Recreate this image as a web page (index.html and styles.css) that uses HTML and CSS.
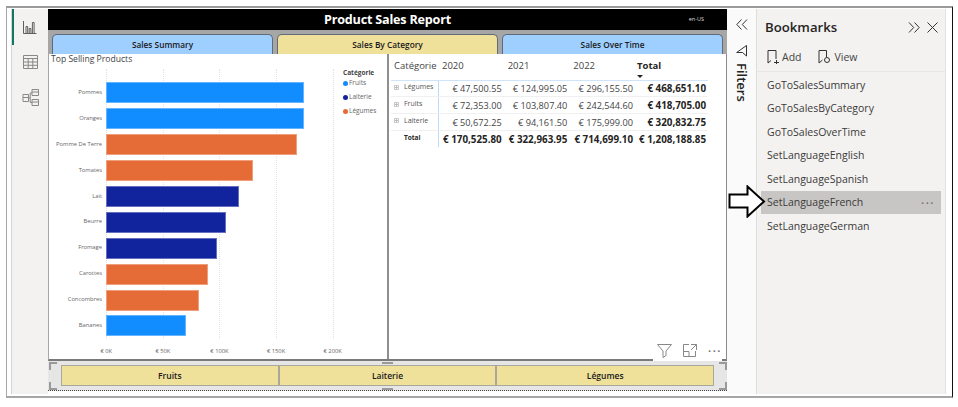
FILE: index.html

```html
<!DOCTYPE html>
<html>
<head>
<meta charset="utf-8">
<title>Product Sales Report</title>
<link rel="stylesheet" href="styles.css">
</head>
<body>
<div class="frame">
  <nav class="sidebar">
    <div class="nav-item active">
      <svg width="14" height="14" viewBox="0 0 14 14" fill="none" stroke="#605e5c"><path d="M.5 1v12.5h13M3 13V6.5h1.700V13M6.200 13V8.500h1.700V13M9.400 13V2.500h1.700V13"/></svg>
    </div>
    <div class="nav-item">
      <svg width="15" height="14" viewBox="0 0 15 14" fill="none" stroke="#8a8886"><path d="M.5.5h14v13H.5zM.5 3.500h14M.5 7h14M.5 10.300h14M5.200 3.500v10M9.800 3.500v10"/></svg>
    </div>
    <div class="nav-item">
      <svg width="17" height="17" viewBox="0 0 17 17" fill="none" stroke="#8a8886"><path d="M1 5.500h5.500v7H1zM1 8.500h5.500M10 .5h6.500v6H10zM10 3h6.500M10 10.500h6.500v6H10zM10 13h6.500M6.500 9h1.700M8.200 4v9.500M8.200 4H10M8.200 13.500H10"/></svg>
    </div>
  </nav>

  <main class="report">
    <header class="report-title">
      <h1>Product Sales Report</h1>
      <span class="locale">en-US</span>
    </header>
    <div class="tabs">
      <div class="tab tab-blue">Sales Summary</div>
      <div class="tab tab-yellow">Sales By Category</div>
      <div class="tab tab-blue">Sales Over Time</div>
    </div>

    <div class="panels">
      <section class="chart">
        <h2>Top Selling Products</h2>
        <div class="chart-body">
          <div class="plot">
            <div class="gridlines"><i></i><i></i><i></i><i></i><i></i></div>
            <div class="row"><span class="row-label">Pommes</span><b class="bar fruits" style="width:198px"></b></div>
            <div class="row"><span class="row-label">Oranges</span><b class="bar fruits" style="width:198px"></b></div>
            <div class="row"><span class="row-label">Pomme De Terre</span><b class="bar legumes" style="width:191px"></b></div>
            <div class="row"><span class="row-label">Tomates</span><b class="bar legumes" style="width:147px"></b></div>
            <div class="row"><span class="row-label">Lait</span><b class="bar laiterie" style="width:133px"></b></div>
            <div class="row"><span class="row-label">Beurre</span><b class="bar laiterie" style="width:120px"></b></div>
            <div class="row"><span class="row-label">Fromage</span><b class="bar laiterie" style="width:111px"></b></div>
            <div class="row"><span class="row-label">Carottes</span><b class="bar legumes" style="width:102px"></b></div>
            <div class="row"><span class="row-label">Concombres</span><b class="bar legumes" style="width:93px"></b></div>
            <div class="row"><span class="row-label">Bananes</span><b class="bar fruits" style="width:80px"></b></div>
            <div class="axis"><span>€ 0K</span><span>€ 50K</span><span>€ 100K</span><span>€ 150K</span><span>€ 200K</span></div>
          </div>
          <div class="legend">
            <strong>Catégorie</strong>
            <span><i class="dot fruits"></i>Fruits</span>
            <span><i class="dot laiterie"></i>Laiterie</span>
            <span><i class="dot legumes"></i>Légumes</span>
          </div>
        </div>
      </section>

      <section class="matrix">
        <table>
          <thead>
            <tr>
              <th class="cat">Catégorie</th>
              <th>2020</th>
              <th>2021</th>
              <th>2022</th>
              <th class="total">Total<i class="sort"></i></th>
            </tr>
          </thead>
          <tbody>
            <tr><td class="cat"><i class="expand"></i>Légumes</td><td>€ 47,500.55</td><td>€ 124,995.05</td><td>€ 296,155.50</td><td class="total">€ 468,651.10</td></tr>
            <tr><td class="cat"><i class="expand"></i>Fruits</td><td>€ 72,353.00</td><td>€ 103,807.40</td><td>€ 242,544.60</td><td class="total">€ 418,705.00</td></tr>
            <tr><td class="cat"><i class="expand"></i>Laiterie</td><td>€ 50,672.25</td><td>€ 94,161.50</td><td>€ 175,999.00</td><td class="total">€ 320,832.75</td></tr>
            <tr class="grand"><td class="cat">Total</td><td>€ 170,525.80</td><td>€ 322,963.95</td><td>€ 714,699.10</td><td class="total">€ 1,208,188.85</td></tr>
          </tbody>
        </table>
        <div class="visual-header">
          <svg width="15" height="14" viewBox="0 0 15 14" fill="none" stroke="#8a8886"><path d="M.5.5h14L9 7v4.500L6 13.500V7z"/></svg>
          <svg width="14" height="13" viewBox="0 0 14 13" fill="none" stroke="#8a8886"><path d="M6 .5H.5v12h12V7M.5 7.500h5.500v5M8 .5h5.500V6M13.500.5L8 6"/></svg>
          <span class="more">···</span>
        </div>
      </section>
    </div>

    <div class="slicer">
      <div class="slicer-btn">Fruits</div>
      <div class="slicer-btn">Laiterie</div>
      <div class="slicer-btn">Légumes</div>
      <i class="mark mark-tl"></i><i class="mark mark-tr"></i><i class="mark mark-bl"></i><i class="mark mark-br"></i>
      <i class="handle handle-t"></i><i class="handle handle-b"></i>
    </div>
  </main>

  <aside class="filters">
    <svg class="chev" width="12" height="11" viewBox="0 0 12 11" fill="none" stroke="#333"><path d="M5.500.5L.8 5.500l4.700 5M11 .5L6.300 5.500l4.700 5"/></svg>
    <svg class="funnel" width="11" height="12" viewBox="0 0 11 12" fill="none" stroke="#333"><path d="M10.500.5v10.500L6.500 7.500H.7L10.500.5z"/></svg>
    <span class="filters-label">Filters</span>
  </aside>

  <aside class="bookmarks">
    <div class="bm-head">
      <h2>Bookmarks</h2>
      <svg width="13" height="11" viewBox="0 0 13 11" fill="none" stroke="#333"><path d="M1 .5l4.700 5-4.700 5M6.500.5l4.700 5-4.700 5"/></svg>
      <svg width="11" height="11" viewBox="0 0 11 11" fill="none" stroke="#333"><path d="M.5.5l10 10M10.500.5l-10 10"/></svg>
    </div>
    <div class="bm-actions">
      <span><svg width="12" height="14" viewBox="0 0 12 14" fill="none" stroke="#333"><path d="M1 13V.5h8V9M1 13l3-2.500M7 12.500h5M9.500 10v5"/></svg>Add</span>
      <span><svg width="14" height="14" viewBox="0 0 14 14" fill="none" stroke="#333"><path d="M1 13V.5h7.500V7M1 13l3.500-3"/><circle cx="9" cy="10" r="2.500"/></svg>View</span>
    </div>
    <ul class="bm-list">
      <li>GoToSalesSummary</li>
      <li>GoToSalesByCategory</li>
      <li>GoToSalesOverTime</li>
      <li>SetLanguageEnglish</li>
      <li>SetLanguageSpanish</li>
      <li class="selected">SetLanguageFrench<span class="more">···</span></li>
      <li>SetLanguageGerman</li>
    </ul>
  </aside>

  <svg class="callout" width="38" height="33" viewBox="0 0 38 33"><path d="M1.500 9.500H19.500V1.500L36 16.500 19.500 31.500V22.500H1.500z" fill="#fff" stroke="#000" stroke-width="2"/></svg>
</div>
</body>
</html>
```

FILE: styles.css

```css
* {
  box-sizing: border-box;
}

body {
  margin: 0;
  background: #fff;
  font-family: "Open Sans", "Liberation Sans", sans-serif;
  color: #252423;
}

h1, h2, ul {
  margin: 0;
  padding: 0;
}

.frame {
  position: relative;
  display: flex;
  width: 947px;
  height: 392px;
  margin: 6px 0 0 6px;
  padding: 1px 0 2px 4px;
  border-top: 2px solid #9a9a9a;
  border-left: 1px solid #a6a6a6;
  border-bottom: 2px solid #a6a6a6;
  border-right: 1px solid #111;
}

/* left nav */
.sidebar {
  width: 37px;
  background: #f3f2f1;
  border-left: 1px solid #d4d4d4;
  display: flex;
  flex-direction: column;
  align-items: center;
}

.nav-item {
  height: 35.500px;
  width: 100%;
  display: flex;
  align-items: center;
  justify-content: center;
}

.nav-item.active {
  box-shadow: inset 2px 0 0 #117865;
}

/* report canvas */
.report {
  width: 679px;
  display: flex;
  flex-direction: column;
}

.report-title {
  height: 21px;
  background: #000;
  color: #fff;
  position: relative;
  text-align: center;
}

.report-title h1 {
  font-size: 12.600px;
  line-height: 21px;
  font-weight: 700;
  letter-spacing: -.2px;
}

.locale {
  position: absolute;
  right: 23px;
  top: 6px;
  font-size: 5.500px;
  line-height: 9px;
  color: #ddd;
}

.tabs {
  height: 24px;
  background: #a6a6a6;
  padding: 4px 4px 0 4px;
  display: flex;
  gap: 4px;
}

.tab {
  flex: 1;
  border: 1px solid #5f6b78;
  border-bottom: 0;
  border-radius: 5px 5px 0 0;
  font-size: 8.300px;
  font-weight: 600;
  line-height: 19px;
  text-align: center;
  color: #1a1a1a;
}

.tab-blue {
  background: #9fcfff;
}

.tab-yellow {
  background: #efe09a;
}

.panels {
  height: 307px;
  display: flex;
  background: #fff;
  border-left: 1px solid #a6a6a6;
  border-right: 1px solid #8a8a8a;
  border-bottom: 2px solid #7a7a7a;
}

/* bar chart */
.chart {
  width: 340px;
  border-right: 2px solid #8f8f8f;
}

.chart h2 {
  font-size: 8.600px;
  font-weight: 400;
  line-height: 11px;
  padding-left: 2px;
  color: #444;
}

.chart-body {
  display: flex;
}

.plot {
  position: relative;
  width: 291px;
  padding-top: 15px;
}

.gridlines i {
  position: absolute;
  top: 4px;
  bottom: 16px;
  left: 57px;
  border-left: 1px dotted #e2e2e2;
}

.gridlines i:nth-child(2) { left: 114px; }
.gridlines i:nth-child(3) { left: 170px; }
.gridlines i:nth-child(4) { left: 227px; }
.gridlines i:nth-child(5) { left: 284px; }

.row {
  position: relative;
  display: flex;
  align-items: center;
  height: 25.900px;
}

.row-label {
  width: 53px;
  margin-right: 4px;
  padding-bottom: 2px;
  font-size: 5.800px;
  text-align: right;
  white-space: nowrap;
  color: #666;
}

.bar {
  height: 21px;
  border: 1px solid rgba(255, 255, 255, .35);
}

.fruits { background: #118dff; }
.laiterie { background: #12239e; }
.legumes { background: #e66c37; }

.axis {
  display: flex;
  margin: 8px 0 0 29px;
  font-size: 5.800px;
  color: #666;
}

.axis span {
  flex: none;
  width: 56.600px;
  text-align: center;
}

.legend {
  display: flex;
  flex-direction: column;
  padding-top: 3px;
  font-size: 6.500px;
  color: #666;
  margin-left: 3px;
  gap: 4px;
}

.legend strong {
  font-weight: 700;
  line-height: 9px;
  margin-bottom: -3px;
  color: #444;
}

.legend span {
  display: flex;
  align-items: center;
  gap: 1px;
  line-height: 10px;
}

.dot {
  width: 5px;
  height: 5px;
  border-radius: 50%;
}

/* matrix */
.matrix {
  position: relative;
  flex: 1;
  padding-left: 2px;
}

table {
  border-collapse: collapse;
  table-layout: fixed;
  width: 317px;
  font-size: 9.200px;
}

th {
  height: 26px;
  font-weight: 400;
  font-size: 9.500px;
  text-align: left;
  padding: 0 0 2px 4px;
  color: #444;
  border-bottom: 1px solid #cfe4fb;
  white-space: nowrap;
}

th.cat {
  width: 47px;
  padding-left: 3px;
}

th.total {
  width: 73px;
  position: relative;
  font-weight: 700;
  color: #252423;
  padding-left: 2px;
}

.sort {
  position: absolute;
  left: 2px;
  bottom: 2px;
  border: 3px solid transparent;
  border-top: 3px solid #222;
  border-bottom: 0;
}

td {
  height: 16.700px;
  text-align: right;
  padding: 1px 2px 0 0;
  white-space: nowrap;
  color: #444;
  border-bottom: 1px solid #f0f0f0;
}

td.cat {
  text-align: left;
  font-size: 7px;
  padding: 0 0 3px 3px;
  border-right: 1px solid #b9dcfb;
  color: #555;
}

td.total {
  font-weight: 700;
  color: #252423;
  font-size: 9.800px;
}

.grand td {
  font-weight: 700;
  color: #252423;
  border-bottom: 0;
  font-size: 9.800px;
}

.grand td.cat {
  font-size: 6.500px;
  padding-left: 13px;
}

.expand {
  display: inline-block;
  width: 5px;
  height: 5px;
  margin-right: 5px;
  border: 1px solid #ccc;
  background:
    linear-gradient(#bbb, #bbb) center / 3px 1px no-repeat,
    linear-gradient(#bbb, #bbb) center / 1px 3px no-repeat;
  vertical-align: middle;
}

.visual-header {
  position: absolute;
  right: 4px;
  bottom: -2px;
  display: flex;
  align-items: center;
  gap: 11px;
  height: 19px;
  padding: 0 0 2px 4px;
  background: #fff;
  color: #8a8886;
}

.more {
  font-size: 11px;
  font-weight: 700;
  line-height: 11px;
  letter-spacing: 1.500px;
  color: #777;
}

/* slicer */
.slicer {
  position: relative;
  height: 30px;
  padding: 4px 13px 4px 13px;
  display: flex;
  background: #e6e6e6;
  border-bottom: 1px dotted #444;
}

.slicer-btn {
  flex: 1;
  background: #efe09a;
  border: 1px solid #aaa89c;
  font-size: 8.500px;
  font-weight: 600;
  line-height: 19px;
  text-align: center;
  color: #1a1a1a;
}

/* resize marks of the selected visual */
.mark {
  position: absolute;
  width: 8px;
  height: 8px;
  border: 0 solid #999;
}

.mark-tl { left: 1px; top: 1px; border-width: 2px 0 0 2px; }
.mark-tr { right: 0; top: 1px; border-width: 2px 2px 0 0; }
.mark-bl { left: 1px; bottom: 0; border-width: 0 0 2px 2px; }
.mark-br { right: 0; bottom: 0; border-width: 0 2px 2px 0; }

.handle {
  position: absolute;
  left: 334px;
  width: 11px;
  height: 2px;
  background: #999;
}

.handle-t { top: 1px; }
.handle-b { bottom: 0; }

/* filters pane */
.filters {
  width: 30px;
  background: #fafafa;
  border-right: 1px solid #ddd;
  display: flex;
  flex-direction: column;
  align-items: center;
}

.chev {
  margin-top: 10px;
}

.funnel {
  margin-top: 15px;
}

.filters-label {
  writing-mode: vertical-rl;
  margin-top: 6px;
  font-size: 13px;
  font-weight: 600;
  color: #252423;
}

/* bookmarks pane */
.bookmarks {
  width: 189px;
  background: #f3f2f1;
  border-right: 1px solid #e4e3e2;
}

.bm-head {
  display: flex;
  align-items: center;
  height: 36px;
  padding: 0 7px 0 8px;
  gap: 6px;
}

.bm-head h2 {
  flex: 1;
  font-size: 13.200px;
  font-weight: 600;
  color: #252423;
}

.bm-actions {
  display: flex;
  gap: 16px;
  height: 27px;
  padding: 2px 0 0 10px;
  border-bottom: 1px solid #e8e7e6;
  font-size: 10.500px;
  color: #444;
}

.bm-actions span {
  display: flex;
  align-items: center;
  gap: 3px;
  height: 20px;
}

.bm-list {
  list-style: none;
  padding: 1px 4px 0;
}

.bm-list li {
  display: flex;
  justify-content: space-between;
  align-items: center;
  height: 23.500px;
  padding: 0 6px;
  font-size: 10.500px;
  color: #3b3a39;
}

.bm-list .selected {
  background: #c8c6c4;
}

.callout {
  position: absolute;
  left: 721px;
  top: 177px;
}
```
